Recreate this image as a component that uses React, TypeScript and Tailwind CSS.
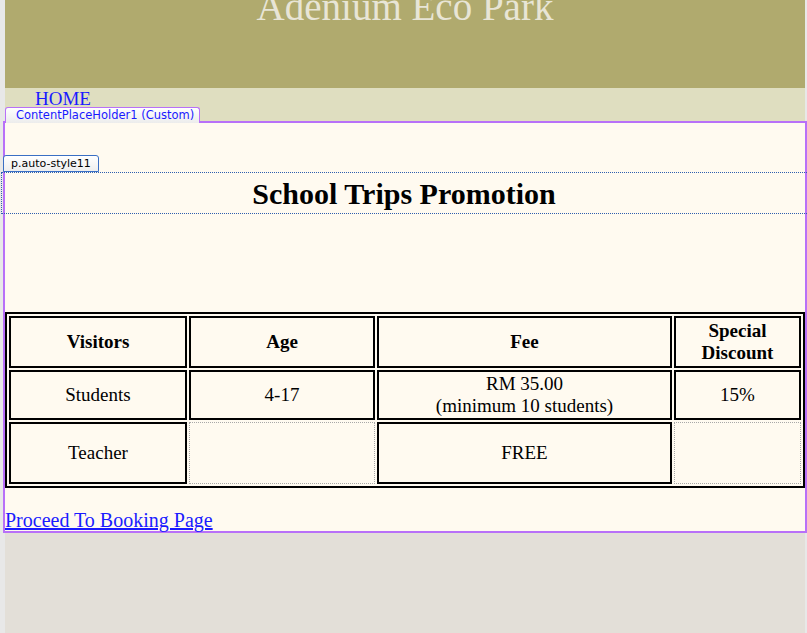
import React from 'react'

interface Row {
  visitor: string
  age: string
  fee: string[]
  discount: string
  height: string
}

const rows: Row[] = [
  { visitor: 'Students', age: '4-17', fee: ['RM 35.00', '(minimum 10 students)'], discount: '15%', height: 'h-[50px]' },
  { visitor: 'Teacher', age: '', fee: ['FREE'], discount: '', height: 'h-[62px]' },
]

function Cell({ children, className = '' }: { children?: React.ReactNode; className?: string }) {
  const empty = children === '' || children === undefined
  return (
    <td
      className={
        'p-0 text-center align-middle leading-[22px] ' +
        (empty ? 'border border-dotted border-[#a8a8a8] ' : 'border-2 border-black ') +
        className
      }
    >
      {children}
    </td>
  )
}

export default function App() {
  return (
    <div className="w-[807px] h-[633px] overflow-hidden bg-[#e8e8e8] font-['Liberation_Serif',serif] text-black">
      <div className="ml-[5px] w-[800px] h-full bg-[#e3dfd8]">
        <header className="h-[88px] overflow-hidden bg-[#b0aa6e] text-center">
          <h1 className="-mt-[13px] text-[39px] leading-none text-[#e8e5d6]">Adenium Eco Park</h1>
        </header>

        <nav className="h-[33px] bg-[#dfdec0] pl-[30px]">
          <a href="#" className="text-[19px] leading-[1.15] text-[#1a1aff]">HOME</a>
        </nav>

        <main className="relative -ml-[2px] w-[804px] h-[412px] border-2 border-[#b870f8] bg-[#fffaf0]">
          <span className="absolute left-0 -top-[16px] h-[16px] w-[195px] rounded-t-[3px] border border-b-0 border-[#b870f8] bg-gradient-to-b from-white to-[#ececec] pl-[10px] font-['DejaVu_Sans',sans-serif] text-[11.5px] leading-[15px] text-[#1a1aff]">
            ContentPlaceHolder1 (Custom)
          </span>

          <div className="relative mt-[49px] -ml-[4px] w-[808px]">
            <span className="absolute left-[2px] -top-[17px] h-[17px] w-[96px] rounded-t-[3px] border border-[#3a6fc4] bg-gradient-to-b from-white to-[#eeeeee] pl-[7px] font-['DejaVu_Sans',sans-serif] text-[11px] leading-[16px] text-black">
              p.auto-style11
            </span>
            <p className="flex h-[42px] items-center justify-center border border-dotted border-[#2f5fae] pr-[2px] text-[30px] font-bold">
              School Trips Promotion
            </p>
          </div>

          <table className="mt-[98px] w-[800px] table-fixed border-separate border-spacing-[2px] border-2 border-black text-[19px]">
            <colgroup>
              <col className="w-[178px]" />
              <col className="w-[186px]" />
              <col className="w-[295px]" />
              <col className="w-[127px]" />
            </colgroup>
            <tbody>
              <tr>
                <Cell className="h-[52px] font-bold">Visitors</Cell>
                <Cell className="h-[52px] font-bold">Age</Cell>
                <Cell className="h-[52px] font-bold">Fee</Cell>
                <Cell className="h-[52px] font-bold">Special<br />Discount</Cell>
              </tr>
              {rows.map(r => (
                <tr key={r.visitor}>
                  <Cell className={r.height}>{r.visitor}</Cell>
                  <Cell className={r.height}>{r.age}</Cell>
                  <Cell className={r.height}>
                    {r.fee.map((line, i) => (
                      <span key={i} className="block">{line}</span>
                    ))}
                  </Cell>
                  <Cell className={r.height}>{r.discount}</Cell>
                </tr>
              ))}
            </tbody>
          </table>

          <a href="#" className="mt-[21px] block w-fit text-[20px] leading-[1.15] text-[#1a1aff] underline">
            Proceed To Booking Page
          </a>
        </main>
      </div>
    </div>
  )
}
